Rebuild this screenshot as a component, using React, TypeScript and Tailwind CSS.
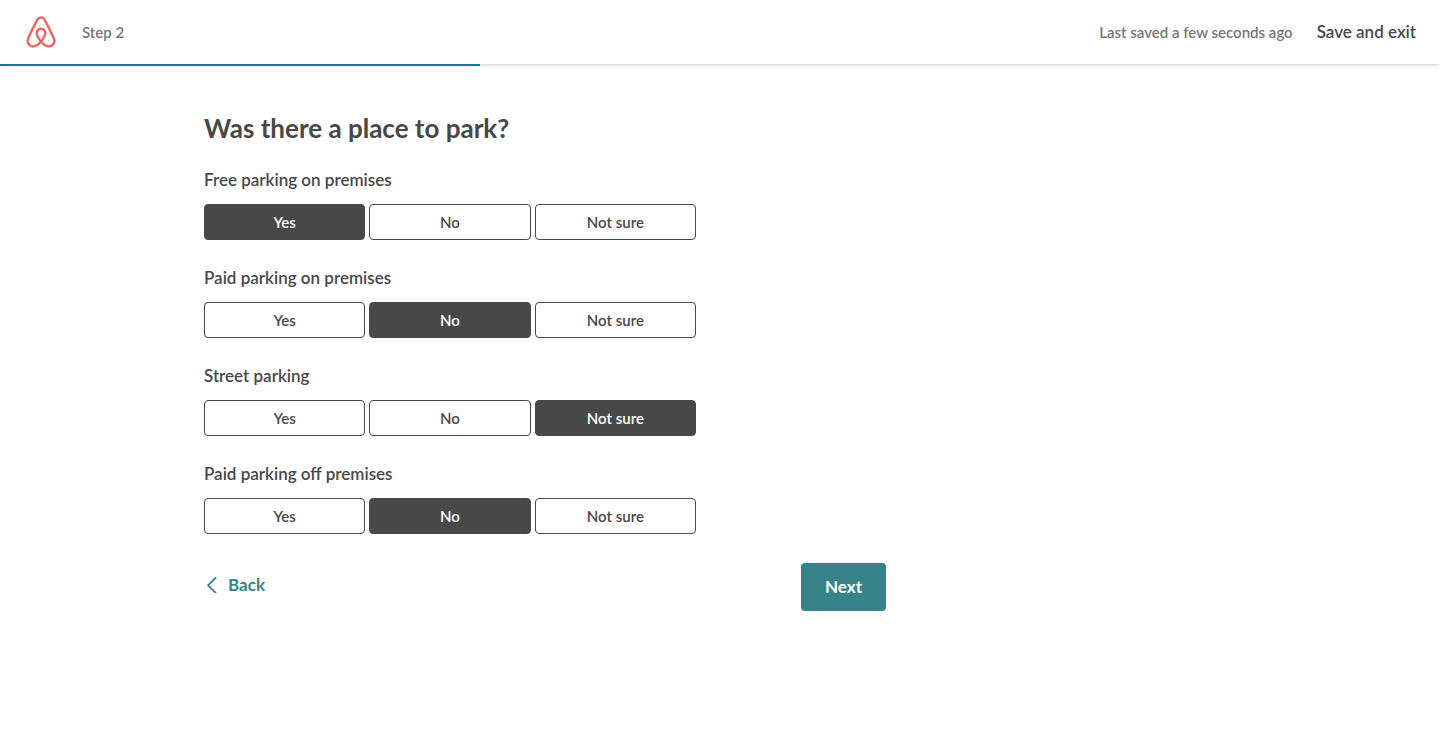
import { useState } from 'react';

type Answer = 'Yes' | 'No' | 'Not sure';

const ANSWERS: Answer[] = ['Yes', 'No', 'Not sure'];

const QUESTIONS: { label: string; initial: Answer }[] = [
  { label: 'Free parking on premises', initial: 'Yes' },
  { label: 'Paid parking on premises', initial: 'No' },
  { label: 'Street parking', initial: 'Not sure' },
  { label: 'Paid parking off premises', initial: 'No' },
];

function Logo() {
  return (
    <svg viewBox="0 0 1000 1000" className="block size-[34px] fill-[#f5585f] stroke-[#f5585f]" strokeWidth="10" aria-hidden="true">
      <path d="m499.3 736.7c-51-64-81-120.1-91-168.1-10-39-6-70 11-93 18-27 45-40 80-40s62 13 80 40c17 23 21 54 11 93-11 49-41 105-91 168.1zm362.2 43c-7 47-39 86-83 105-85 37-169.1-22-241.1-102 119.1-149.1 141.1-265.1 90-340.2-30-43-73-64-128.1-64-111 0-172.1 94-148.1 203.1 14 59 51 126.1 110 201.1-37 41-72 70-103 88-24 13-47 21-69 23-101 15-180.1-83-144.1-184.1 5-13 15-37 32-74l1-2c55-120.1 122.1-256.1 199.1-407.2l2-5 22-42c17-31 24-45 51-62 13-8 29-12 47-12 36 0 64 21 76 38 6 9 13 21 22 36l21 41 3 6c77 151.1 144.1 287.1 199.1 407.2l1 1 20 46 12 29c9.2 23.1 11.2 46.1 8.2 70.1zm46-90.1c-7-22-19-48-34-79v-1c-71-151.1-137.1-287.1-200.1-409.2l-4-6c-45-92-77-147.1-170.1-147.1-92 0-131.1 64-171.1 147.1l-3 6c-63 122.1-129.1 258.1-200.1 409.2v2l-21 46c-8 19-12 29-13 32-51 140.1 54 263.1 181.1 263.1 1 0 5 0 10-1h14c66-8 134.1-50 203.1-125.1 69 75 137.1 117.1 203.1 125.1h14c5 1 9 1 10 1 127.1.1 232.1-123 181.1-263.1z" />
    </svg>
  );
}

function Header() {
  return (
    <header className="relative flex h-16 items-center justify-between bg-white px-6 shadow-[0_1px_4px_rgba(0,0,0,0.2)]">
      <div className="flex items-center gap-6">
        <a href="#home" aria-label="Home">
          <Logo />
        </a>
        <span className="text-[15px] text-[#767676]">Step 2</span>
      </div>
      <div className="flex items-center gap-6">
        <span className="text-[15px] text-[#767676]">Last saved a few seconds ago</span>
        <button type="button" className="text-[17px] text-[#484848]">
          Save and exit
        </button>
      </div>
      <div className="absolute top-full left-0 h-0.5 w-1/3 bg-[#008489]" />
    </header>
  );
}

function Question({ label, initial }: { label: string; initial: Answer }) {
  const [value, setValue] = useState<Answer>(initial);
  return (
    <fieldset>
      <legend className="mb-3.5 text-[17px] leading-5">{label}</legend>
      <div className="grid max-w-[492px] grid-cols-3 gap-1">
        {ANSWERS.map((answer) => (
          <button
            key={answer}
            type="button"
            aria-pressed={value === answer}
            onClick={() => setValue(answer)}
            className={
              value === answer
                ? 'h-9 rounded border border-[#484848] bg-[#484848] text-[15px] text-white'
                : 'h-9 rounded border border-[#484848] bg-white text-[15px] text-[#484848]'
            }
          >
            {answer}
          </button>
        ))}
      </div>
    </fieldset>
  );
}

export default function App() {
  return (
    <div className="min-h-screen bg-white font-['Lato','Noto_Sans',sans-serif] font-semibold text-[#484848]">
      <Header />
      <main className="mx-auto max-w-[1080px] px-6 pt-12 pb-16">
        <form className="max-w-[682px]" onSubmit={(e) => e.preventDefault()}>
          <h1 className="text-[26px] leading-8 font-bold">Was there a place to park?</h1>
          <div className="mt-[26px] flex flex-col gap-7">
            {QUESTIONS.map((q) => (
              <Question key={q.label} label={q.label} initial={q.initial} />
            ))}
          </div>
          <div className="mt-[29px] flex items-start justify-between">
            <button type="button" className="flex h-11 items-center gap-2 text-[17px] font-bold text-[#368489]">
              <svg viewBox="0 0 16 16" className="size-4" fill="none" stroke="currentColor" strokeWidth="1.8" strokeLinecap="round" strokeLinejoin="round" aria-hidden="true">
                <path d="M11.500 1 4 8.300l7.500 7.300" />
              </svg>
              Back
            </button>
            <button type="submit" className="h-12 rounded bg-[#368489] px-6 text-[17px] font-bold text-white">
              Next
            </button>
          </div>
        </form>
      </main>
    </div>
  );
}
